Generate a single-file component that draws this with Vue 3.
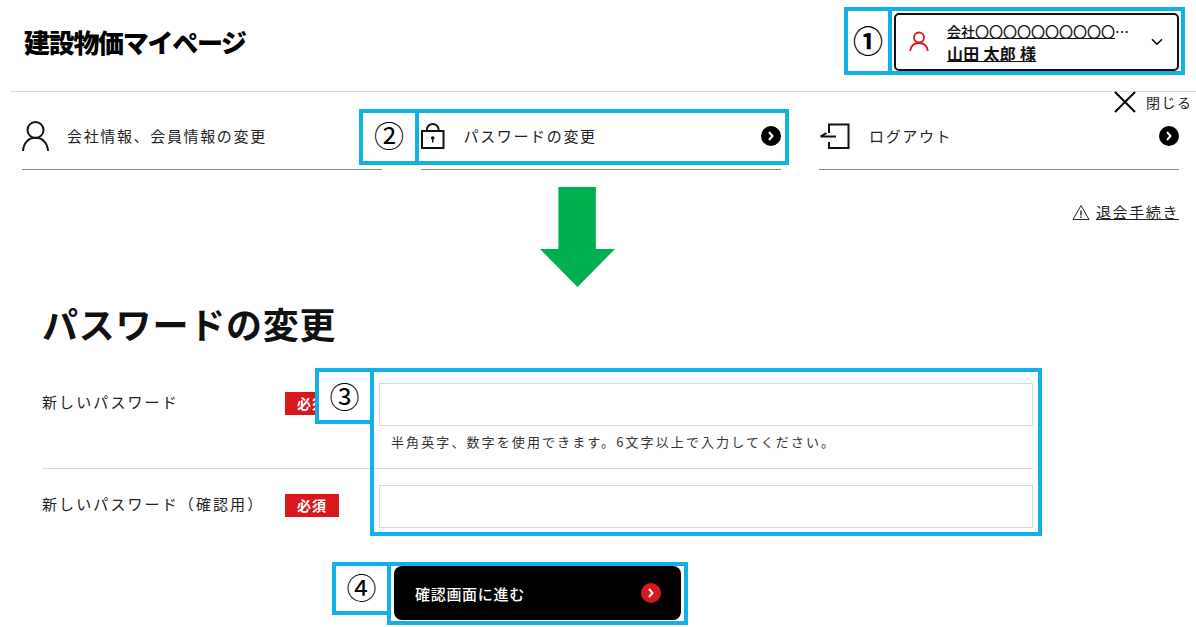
<script setup>
const menu = [
  { label: '会社情報、会員情報の変更', icon: 'user' },
  { label: 'パスワードの変更', icon: 'lock' },
  { label: 'ログアウト', icon: 'logout' },
]
</script>

<template>
  <div class="page">
    <header class="header">
      <h1 class="logo">建設物価マイページ</h1>
      <button type="button" class="account">
        <svg class="account__icon" width="20" height="21" viewBox="0 0 20 21" fill="none" stroke="#d7191b" stroke-width="1.8">
          <circle cx="10" cy="6.5" r="5" />
          <path d="M1.2 20c.6-5 3.6-8 8.8-8s8.2 3 8.8 8" />
        </svg>
        <span class="account__text">
          <span class="account__company"><u>会社〇〇〇〇〇〇〇〇〇〇</u>…</span>
          <span class="account__name">山田 太郎 様</span>
        </span>
        <svg class="account__chevron" width="12" height="8" viewBox="0 0 12 8" fill="none" stroke="#000" stroke-width="1.6">
          <path d="M1 1.2l5 5 5-5" />
        </svg>
      </button>
    </header>

    <a class="close" href="#">
      <svg width="24" height="24" viewBox="0 0 24 24" fill="none" stroke="#000" stroke-width="2">
        <path d="M2 2l20 20M22 2L2 22" />
      </svg>
      <span>閉じる</span>
    </a>

    <nav class="menu">
      <a v-for="item in menu" :key="item.label" class="menu__item" href="#">
        <svg v-if="item.icon === 'user'" class="menu__icon menu__icon--user" width="27" height="30" viewBox="0 0 27 30" fill="none" stroke="#111" stroke-width="2">
          <circle cx="13.5" cy="9" r="8" />
          <path d="M1 30c.4-7.500 5-13.200 12.500-13.200S25.600 22.500 26 30" />
        </svg>
        <svg v-else-if="item.icon === 'lock'" class="menu__icon menu__icon--lock" width="24" height="26" viewBox="0 0 24 26" fill="none" stroke="#111" stroke-width="2">
          <rect x="1" y="8" width="21.500" height="17" />
          <path d="M5.800 8V7a5.950 5.950 0 0 1 11.900 0v1" />
          <circle cx="11.700" cy="15" r="1.800" fill="#111" stroke="none" />
          <path d="M11.700 15v4.500" stroke-width="1.400" />
        </svg>
        <svg v-else class="menu__icon menu__icon--logout" width="32" height="26" viewBox="0 0 32 26" fill="none" stroke="#111" stroke-width="2">
          <path d="M10 10V1.500h19.500V25H10v-6" />
          <path d="M1.500 13.500H17M1.500 13.500l6-3.500" />
        </svg>
        <span class="menu__label">{{ item.label }}</span>
        <span class="menu__arrow">
          <svg width="8" height="10" viewBox="0 0 8 10" fill="none" stroke="#fff" stroke-width="2">
            <path d="M2 1l3.500 4L2 9" />
          </svg>
        </span>
      </a>
    </nav>

    <div class="withdraw">
      <svg width="18" height="17" viewBox="0 0 18 17" fill="none" stroke="#222" stroke-width="1">
        <path d="M9 1.500L1 15.500h16z" />
        <path d="M9 6.500v5M9 12.500v1.500" stroke-width="1.400" />
      </svg>
      <a href="#">退会手続き</a>
    </div>

    <main class="content">
      <h2 class="title">パスワードの変更</h2>

      <form class="form" @submit.prevent>
        <div class="row row--first">
          <span class="row__label">新しいパスワード</span>
          <span class="badge">必須</span>
          <div class="row__field">
            <input class="input" type="password" />
            <p class="hint">半角英字、数字を使用できます。6文字以上で入力してください。</p>
          </div>
        </div>
        <div class="row">
          <span class="row__label">新しいパスワード（確認用）</span>
          <span class="badge">必須</span>
          <div class="row__field">
            <input class="input" type="password" />
          </div>
        </div>
        <button type="submit" class="submit">
          <span>確認画面に進む</span>
          <span class="submit__arrow">
            <svg width="8" height="10" viewBox="0 0 8 10" fill="none" stroke="#fff" stroke-width="2">
              <path d="M2 1l3.500 4L2 9" />
            </svg>
          </span>
        </button>
      </form>
    </main>

    <!-- 説明用の注釈 -->
    <div class="note note--num1">①</div>
    <div class="note note--box1"></div>
    <div class="note note--num2">②</div>
    <div class="note note--box2"></div>
    <div class="note note--box3"></div>
    <div class="note note--num3">③</div>
    <div class="note note--box4"></div>
    <div class="note note--num4">④</div>
    <div class="down"></div>
  </div>
</template>

<style>
html,
body {
  margin: 0;
  background: #fff;
}
</style>

<style scoped>
.page {
  position: relative;
  width: 1196px;
  height: 627px;
  overflow: hidden;
  color: #222;
  font-family: "Noto Sans CJK JP", "Noto Sans", sans-serif;
  background: #fff;
}

a {
  color: inherit;
}

.header {
  display: flex;
  align-items: center;
  justify-content: space-between;
  height: 92px;
  margin-left: 10px;
  padding: 0 17px 8px 14px;
  box-sizing: border-box;
  border-bottom: 1px solid #d9d9d9;
}

.logo {
  margin: 0;
  font-size: 26px;
  font-weight: 900;
  letter-spacing: -1.300px;
  line-height: 1.2;
  color: #000;
}

.account {
  display: flex;
  align-items: center;
  width: 285px;
  height: 58px;
  padding: 0 14px 0 13px;
  box-sizing: border-box;
  font-family: inherit;
  color: #111;
  text-align: left;
  background: #fff;
  border: 2px solid #111;
  border-radius: 5px;
}

.account__icon {
  flex: none;
}

.account__text {
  flex: 1;
  display: flex;
  flex-direction: column;
  min-width: 0;
  margin-left: 18px;
  margin-right: 20px;
  padding-top: 2px;
}

.account__company {
  font-size: 14px;
  font-weight: 500;
  line-height: 21px;
  white-space: nowrap;
}

.account__name {
  font-size: 16px;
  font-weight: 700;
  line-height: 22px;
  letter-spacing: 0.3px;
  text-decoration: underline;
}

.account__chevron {
  flex: none;
}

.close {
  position: absolute;
  top: 90px;
  left: 1113px;
  display: flex;
  align-items: center;
  gap: 9px;
  font-size: 14px;
  letter-spacing: 1.500px;
  text-decoration: none;
}

.menu {
  display: grid;
  grid-template-columns: repeat(3, 360px);
  justify-content: space-between;
  margin: 10px 17px 0 22px;
}

.menu__item {
  display: flex;
  align-items: center;
  height: 67px;
  border-bottom: 1px solid #888;
  text-decoration: none;
}

.menu__icon {
  flex: none;
}

.menu__icon--user {
  margin-right: 18px;
}

.menu__icon--lock {
  margin-right: 19px;
}

.menu__icon--logout {
  margin-right: 18px;
}

.menu__label {
  flex: 1;
  font-size: 15px;
  letter-spacing: 1.650px;
}

.menu__arrow,
.submit__arrow {
  display: flex;
  align-items: center;
  justify-content: center;
  width: 20px;
  height: 20px;
  background: #000;
  border-radius: 50%;
}

.withdraw {
  display: flex;
  align-items: center;
  justify-content: flex-end;
  gap: 6px;
  margin: 30px 17px 0 0;
  font-size: 15px;
  line-height: 24px;
  letter-spacing: 1.600px;
}

.content {
  margin: 74px 163px 0 42px;
}

.title {
  margin: 0 0 35px;
  font-size: 36px;
  font-weight: 700;
  line-height: 50px;
  letter-spacing: 0.800px;
  color: #111;
}

.row {
  display: flex;
  align-items: flex-start;
}

.row--first {
  padding-bottom: 15px;
  margin-bottom: 16px;
  border-bottom: 1px solid #d9d9d9;
}

.row__label {
  width: 243px;
  flex: none;
  margin-top: 8px;
  font-size: 15px;
  line-height: 22px;
  letter-spacing: 2.100px;
  white-space: nowrap;
}

.badge {
  flex: none;
  width: 54px;
  height: 23px;
  margin-top: 9px;
  font-size: 14px;
  font-weight: 700;
  line-height: 23px;
  letter-spacing: 1px;
  color: #fff;
  text-align: center;
  background: #d7191b;
}

.row__field {
  flex: 1;
  margin-left: 40px;
}

.input {
  display: block;
  width: 100%;
  height: 43px;
  box-sizing: border-box;
  background: #fff;
  border: 1px solid #d9d9d9;
  outline: none;
}

.hint {
  margin: 5px 0 0 12px;
  font-size: 13px;
  line-height: 22px;
  letter-spacing: 2.100px;
  color: #333;
}

.submit {
  display: flex;
  align-items: center;
  justify-content: space-between;
  width: 287px;
  height: 54px;
  margin: 38px auto 0;
  padding: 0 20px 0 21px;
  box-sizing: border-box;
  font-family: inherit;
  font-size: 15px;
  font-weight: 500;
  letter-spacing: 0.700px;
  color: #fff;
  background: #000;
  border: 0;
  border-radius: 8px;
}

.submit__arrow {
  background: #d7191b;
}

/* 注釈 */
.note {
  position: absolute;
  box-sizing: border-box;
  display: flex;
  align-items: center;
  justify-content: center;
  font-size: 30px;
  line-height: 1;
  color: #000;
  border: 4px solid #11b0e8;
}

.note--num1 {
  top: 7px;
  left: 844px;
  width: 48px;
  height: 68px;
  padding-bottom: 4px;
  background: #fff;
  font-weight: 700;
}

.note--box1 {
  top: 7px;
  left: 888px;
  width: 297px;
  height: 68px;
}

.note--num2 {
  top: 109px;
  left: 359px;
  width: 60px;
  height: 56px;
  padding-bottom: 6px;
  background: #fff;
}

.note--box2 {
  top: 109px;
  left: 415px;
  width: 374px;
  height: 56px;
}

.note--box3 {
  top: 368px;
  left: 370px;
  width: 672px;
  height: 168px;
}

.note--num3 {
  top: 368px;
  left: 315px;
  width: 59px;
  height: 56px;
  padding-bottom: 2px;
  background: #fff;
}

.note--box4 {
  top: 562px;
  left: 387px;
  width: 301px;
  height: 63px;
}

.note--num4 {
  top: 562px;
  left: 332px;
  width: 59px;
  height: 53px;
  padding-bottom: 6px;
  background: #fff;
}

.down {
  position: absolute;
  top: 187px;
  left: 540px;
  width: 75px;
  height: 100px;
  background: #00b050;
  clip-path: polygon(24.500% 0, 74.500% 0, 74.500% 62%, 100% 62%, 50% 100%, 0 62%, 24.500% 62%);
}
</style>
